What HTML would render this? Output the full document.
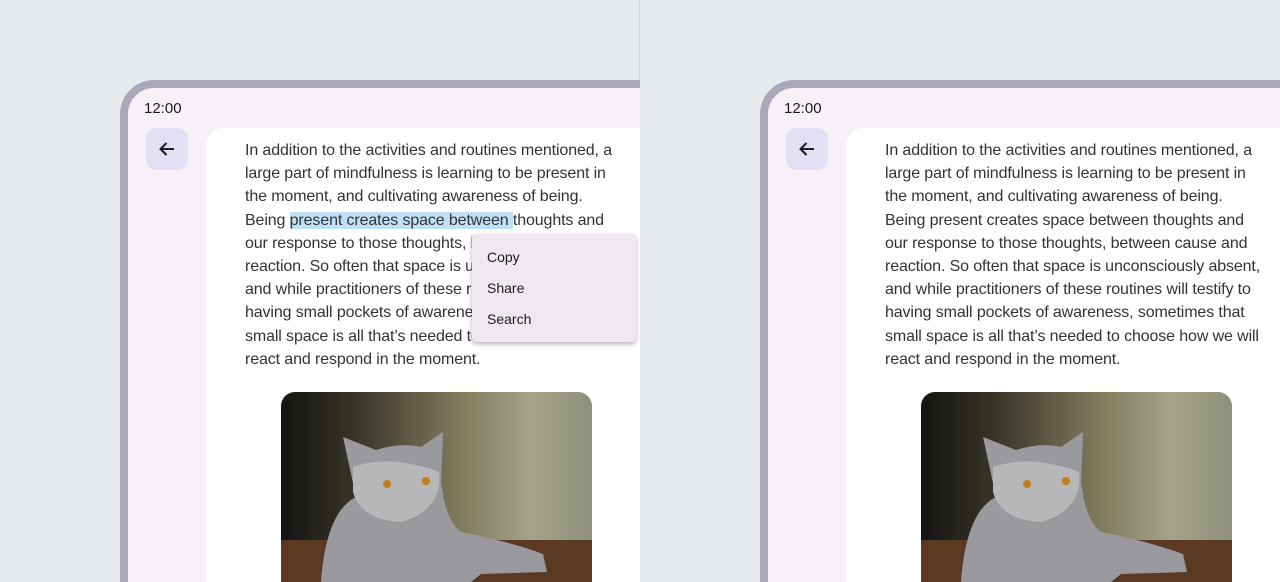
<!DOCTYPE html>
<html><head><style>
*{margin:0;padding:0;box-sizing:border-box}
html,body{width:1280px;height:582px;overflow:hidden}
body{background:#e7ebee;font-family:"Liberation Sans",sans-serif;position:relative}
.panel{position:absolute;top:0;width:640px;height:582px;overflow:hidden}
.divider{position:absolute;left:639px;top:0;width:1px;height:582px;background:#d3d8dc}
.frame{position:absolute;left:120px;top:80px;width:520px;height:502px;background:#f6f0f7;border:8px solid #aba9b9;border-right:none;border-bottom:none;border-radius:34px 0 0 0}
.time{position:absolute;left:144px;top:100px;font-size:15px;color:#1d1b20}
.back{position:absolute;left:146px;top:128px;width:42px;height:42px;border-radius:10px;background:#e3e0f6}
.back svg{position:absolute;left:11px;top:11px}
.card{position:absolute;left:206px;top:128px;width:434px;height:454px;background:#fff;border-radius:18px 0 0 0}
.text{position:absolute;left:245px;top:139px;width:420px;font-size:16px;line-height:23.2px;color:#333;letter-spacing:-0.12px;white-space:nowrap}
.hl{background:#bfe0f5}
.img{position:absolute;left:281px;top:392px;width:311px;height:190px;border-radius:14px 14px 0 0;overflow:hidden;background:linear-gradient(90deg,#141414 0%,#3a3628 25%,#7a7659 55%,#a3a388 80%,#8f917a 100%)}
.menu{position:absolute;left:472px;top:234px;width:164px;height:108px;background:#efe8f0;border-radius:4px;box-shadow:0 2px 5px rgba(0,0,0,.3)}
.menu div{position:absolute;left:15px;font-size:14px;color:#1d1b20}
</style></head><body>
<div class="divider"></div>

<div class="panel" style="left:0">
<div class="frame"></div>
<div class="time">12:00</div>
<div class="back"><svg width="20" height="20" viewBox="0 0 20 20"><path d="M17 10H4M9.5 4L3.5 10l6 6" stroke="#1d1b20" stroke-width="2" fill="none"/></svg></div>
<div class="card"></div>
<div class="text">In addition to the activities and routines mentioned, a<br>large part of mindfulness is learning to be present in<br>the moment, and cultivating awareness of being.<br>Being <span class="hl">present creates space between </span>thoughts and<br>our response to those thoughts, between cause and<br>reaction. So often that space is unconsciously absent,<br>and while practitioners of these routines will testify to<br>having small pockets of awareness, sometimes that<br>small space is all that’s needed to choose how we will<br>react and respond in the moment.</div>
<div class="img"><svg width="311" height="190" viewBox="0 0 311 190">
<rect x="0" y="148" width="311" height="42" fill="#5a3a22"/>
<path d="M40 190 Q45 120 75 105 L62 45 L95 58 Q120 50 140 55 L162 40 L160 90 Q165 130 180 140 Q230 150 262 162 L266 180 L200 182 L190 190Z" fill="#9a9a9e"/>
<path d="M72 75 Q110 62 158 80 Q162 118 120 130 Q80 128 72 100Z" fill="#b8b8bb"/>
<circle cx="106" cy="92" r="4" fill="#c67a1a"/><circle cx="145" cy="89" r="4" fill="#c67a1a"/>
</svg></div>
<div class="menu"><div style="top:15px">Copy</div><div style="top:46px">Share</div><div style="top:77px">Search</div></div>
</div>

<div class="panel" style="left:640px">
<div class="frame"></div>
<div class="time">12:00</div>
<div class="back"><svg width="20" height="20" viewBox="0 0 20 20"><path d="M17 10H4M9.5 4L3.5 10l6 6" stroke="#1d1b20" stroke-width="2" fill="none"/></svg></div>
<div class="card"></div>
<div class="text">In addition to the activities and routines mentioned, a<br>large part of mindfulness is learning to be present in<br>the moment, and cultivating awareness of being.<br>Being present creates space between thoughts and<br>our response to those thoughts, between cause and<br>reaction. So often that space is unconsciously absent,<br>and while practitioners of these routines will testify to<br>having small pockets of awareness, sometimes that<br>small space is all that’s needed to choose how we will<br>react and respond in the moment.</div>
<div class="img"><svg width="311" height="190" viewBox="0 0 311 190">
<rect x="0" y="148" width="311" height="42" fill="#5a3a22"/>
<path d="M40 190 Q45 120 75 105 L62 45 L95 58 Q120 50 140 55 L162 40 L160 90 Q165 130 180 140 Q230 150 262 162 L266 180 L200 182 L190 190Z" fill="#9a9a9e"/>
<path d="M72 75 Q110 62 158 80 Q162 118 120 130 Q80 128 72 100Z" fill="#b8b8bb"/>
<circle cx="106" cy="92" r="4" fill="#c67a1a"/><circle cx="145" cy="89" r="4" fill="#c67a1a"/>
</svg></div>
</div>
</body></html>
